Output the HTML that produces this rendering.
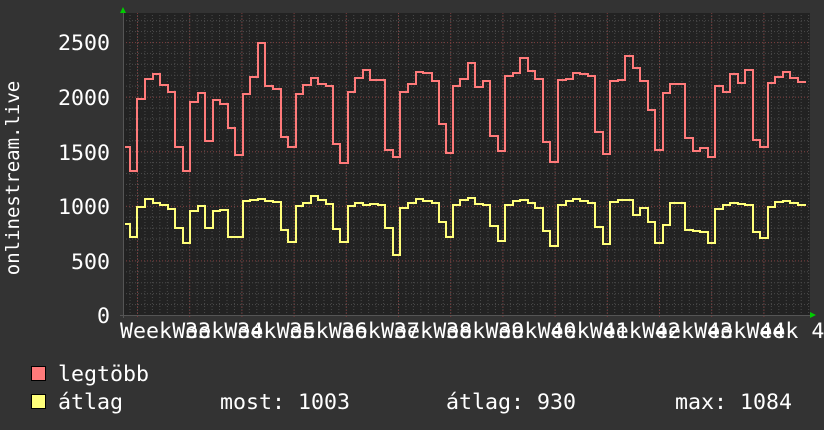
<!DOCTYPE html>
<html><head><meta charset="utf-8"><style>
html,body{margin:0;padding:0;background:#333;}
svg{display:block;}
text{font-family:"DejaVu Sans Mono","Liberation Mono",monospace;fill:#fff;}
</style></head><body>
<svg width="824" height="430" viewBox="0 0 824 430" xmlns="http://www.w3.org/2000/svg">
<defs>
<pattern id="hg" patternUnits="userSpaceOnUse" x="0" y="315" width="824" height="10.92">
<line x1="0" y1="0.5" x2="824" y2="0.5" stroke="#4a4a4a" stroke-width="1" stroke-dasharray="1,2"/>
</pattern>
<pattern id="vg" patternUnits="userSpaceOnUse" x="137" y="0" width="7.457" height="430">
<line x1="0.5" y1="0" x2="0.5" y2="430" stroke="#4a4a4a" stroke-width="1" stroke-dasharray="1,2"/>
</pattern>
</defs>
<rect width="824" height="430" fill="#333"/>
<rect x="123" y="13" width="687" height="303" fill="#222"/>
<rect x="123" y="13" width="687" height="303" fill="url(#hg)"/>
<rect x="123" y="13" width="687" height="303" fill="url(#vg)"/>
<g stroke="#7a3a3a" stroke-width="1" stroke-dasharray="1,2">
<line x1="123" y1="260.9" x2="810" y2="260.9"/>
<line x1="123" y1="206.4" x2="810" y2="206.4"/>
<line x1="123" y1="151.8" x2="810" y2="151.8"/>
<line x1="123" y1="97.2" x2="810" y2="97.2"/>
<line x1="123" y1="42.6" x2="810" y2="42.6"/>
<line x1="137.5" y1="13" x2="137.5" y2="318"/>
<line x1="189.7" y1="13" x2="189.7" y2="318"/>
<line x1="241.9" y1="13" x2="241.9" y2="318"/>
<line x1="294.1" y1="13" x2="294.1" y2="318"/>
<line x1="346.3" y1="13" x2="346.3" y2="318"/>
<line x1="398.5" y1="13" x2="398.5" y2="318"/>
<line x1="450.7" y1="13" x2="450.7" y2="318"/>
<line x1="502.9" y1="13" x2="502.9" y2="318"/>
<line x1="555.1" y1="13" x2="555.1" y2="318"/>
<line x1="607.3" y1="13" x2="607.3" y2="318"/>
<line x1="659.5" y1="13" x2="659.5" y2="318"/>
<line x1="711.7" y1="13" x2="711.7" y2="318"/>
<line x1="763.9" y1="13" x2="763.9" y2="318"/>
</g>
<line x1="120" y1="315.5" x2="810" y2="315.5" stroke="#555" stroke-width="1"/>
<line x1="123.5" y1="13" x2="123.5" y2="318" stroke="#555" stroke-width="1"/>
<polygon points="120,13 126,13 123,7" fill="#0c0"/>
<polygon points="810,312 810,318 816,315" fill="#0c0"/>

<polyline fill="none" stroke="#ff7a7a" stroke-width="2" points="125,147 130,147 130,171 137,171 137,99 145,99 145,79 153,79 153,74 160,74 160,85 168,85 168,92 175,92 175,147 183,147 183,171 190,171 190,102 198,102 198,93 205,93 205,141 213,141 213,100 220,100 220,104 228,104 228,128 235,128 235,155 243,155 243,94 250,94 250,77 258,77 258,43 265,43 265,86 273,86 273,89 281,89 281,137 288,137 288,147 296,147 296,94 303,94 303,85 311,85 311,78 318,78 318,84 326,84 326,86 333,86 333,144 340,144 340,163 348,163 348,92 355,92 355,78 363,78 363,70 370,70 370,80 385,80 385,150 393,150 393,157 400,157 400,92 408,92 408,84 416,84 416,72 423,72 423,73 432,73 432,81 439,81 439,124 446,124 446,153 453,153 453,86 460,86 460,79 468,79 468,63 475,63 475,87 483,87 483,81 490,81 490,136 498,136 498,151 505,151 505,76 513,76 513,73 520,73 520,58 528,58 528,71 535,71 535,79 543,79 543,142 550,142 550,162 558,162 558,80 566,80 566,79 573,79 573,73 580,73 580,74 588,74 588,76 595,76 595,132 603,132 603,154 610,154 610,81 618,81 618,80 625,80 625,56 633,56 633,68 640,68 640,81 648,81 648,110 655,110 655,150 663,150 663,93 670,93 670,84 678,84 678,84 685,84 685,138 693,138 693,151 700,151 700,148 708,148 708,157 715,157 715,86 723,86 723,92 730,92 730,74 738,74 738,83 745,83 745,70 753,70 753,140 760,140 760,147 768,147 768,83 775,83 775,77 783,77 783,72 790,72 790,78 798,78 798,82 806,82"/>

<polyline fill="none" stroke="#ffff7a" stroke-width="2" points="125,224 130,224 130,237 137,237 137,207 145,207 145,199 153,199 153,203 160,203 160,205 168,205 168,209 175,209 175,228 183,228 183,243 190,243 190,211 198,211 198,206 205,206 205,228 213,228 213,211 220,211 220,210 228,210 228,237 235,237 235,237 243,237 243,201 250,201 250,200 258,200 258,199 265,199 265,201 273,201 273,202 281,202 281,230 288,230 288,242 296,242 296,206 303,206 303,203 311,203 311,196 318,196 318,200 326,200 326,204 333,204 333,229 340,229 340,242 348,242 348,206 355,206 355,203 363,203 363,205 370,205 370,204 378,204 378,205 385,205 385,228 393,228 393,255 400,255 400,208 408,208 408,203 416,203 416,199 423,199 423,201 432,201 432,203 439,203 439,222 446,222 446,237 453,237 453,205 460,205 460,200 468,200 468,198 475,198 475,204 483,204 483,205 490,205 490,226 498,226 498,241 505,241 505,205 513,205 513,201 520,201 520,200 528,200 528,203 535,203 535,208 543,208 543,231 550,231 550,246 558,246 558,205 566,205 566,201 573,201 573,199 580,199 580,201 588,201 588,203 595,203 595,227 603,227 603,244 610,244 610,202 618,202 618,200 625,200 625,200 633,200 633,215 640,215 640,208 648,208 648,222 655,222 655,243 663,243 663,225 670,225 670,203 678,203 678,203 685,203 685,230 693,230 693,231 700,231 700,232 708,232 708,243 715,243 715,209 723,209 723,205 730,205 730,203 738,203 738,204 745,204 745,205 753,205 753,232 760,232 760,238 768,238 768,207 775,207 775,202 783,202 783,201 790,201 790,203 798,203 798,205 806,205"/>

<g font-size="21.6" text-anchor="end">
<text x="110" y="50">2500</text>
<text x="110" y="105">2000</text>
<text x="110" y="160">1500</text>
<text x="110" y="214">1000</text>
<text x="110" y="269">500</text>
<text x="110" y="323">0</text>
</g>
<g font-size="21.6">
<text x="120" y="338">Week 33</text>
<text x="172.2" y="338">Week 34</text>
<text x="224.4" y="338">Week 35</text>
<text x="276.6" y="338">Week 36</text>
<text x="328.8" y="338">Week 37</text>
<text x="381" y="338">Week 38</text>
<text x="433.2" y="338">Week 39</text>
<text x="485.4" y="338">Week 40</text>
<text x="537.6" y="338">Week 41</text>
<text x="589.8" y="338">Week 42</text>
<text x="642" y="338">Week 43</text>
<text x="694.2" y="338">Week 44</text>
<text x="746.4" y="338">Week 45</text>
</g>
<text font-size="19" text-anchor="middle" transform="translate(19,178) rotate(-90)">onlinestream.live</text>

<rect x="31.5" y="366.5" width="14" height="14" fill="#ff7a7a" stroke="#000" stroke-width="1"/>
<rect x="31.5" y="394.5" width="14" height="14" fill="#ffff7a" stroke="#000" stroke-width="1"/>
<g font-size="21.6">
<text x="58" y="381">legtöbb</text>
<text x="58" y="409">átlag</text>
<text x="220" y="409">most: 1003</text>
<text x="446" y="409">átlag: 930</text>
<text x="675" y="409">max: 1084</text>
</g>
</svg>
</body></html>
